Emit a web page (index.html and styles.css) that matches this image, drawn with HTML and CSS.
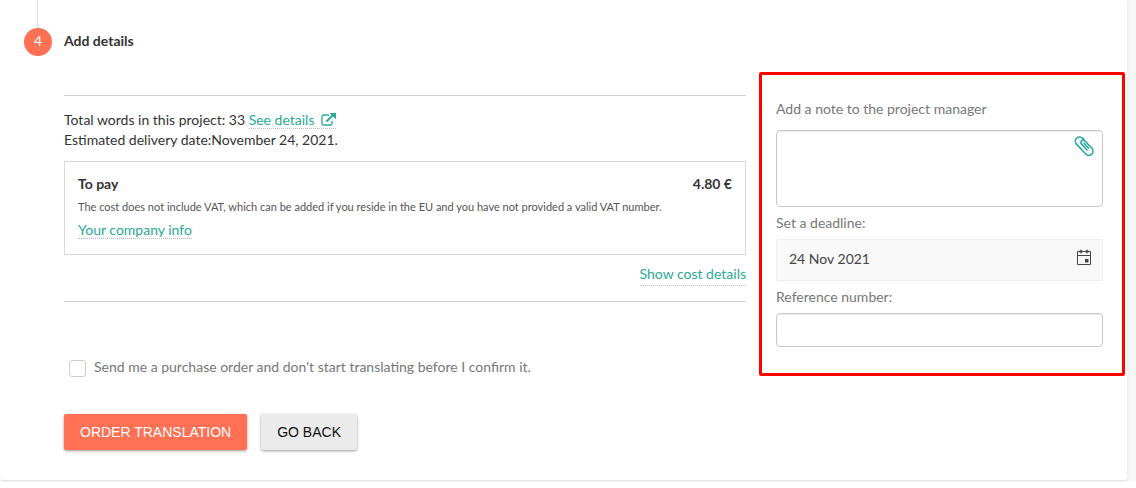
FILE: index.html
```html
<!DOCTYPE html>
<html lang="en">
	<head>
		<meta charset="UTF-8">
		<meta name="viewport" content="width=device-width,initial-scale=1" />
		<title>Add details</title>
		<link rel="stylesheet" href="styles.css">
	</head>
	<body>
		<div class="page">
			<form class="card">
				<div class="line"></div>
				<header class="step">
					<span class="step-num">4</span>
					<h2 class="step-title">Add details</h2>
				</header>
				<div class="columns">
					<section class="order">
						<div class="summary">
							<p>Total words in this project: 33 <a href="#" class="link">See details
								<svg class="icon-open" width="15" height="13" viewBox="0 0 15 13"><path d="M8 2H2.500Q1 2 1 3.500v7Q1 12 2.500 12h7Q11 12 11 10.500V8" fill="none" stroke="currentColor" stroke-width="1.300"/><path d="M5.500 8.500 12 2" stroke="currentColor" stroke-width="2"/><path d="M8.500 0H15v6.200z" fill="currentColor"/></svg></a></p>
							<p>Estimated delivery date:November 24, 2021.</p>
							<div class="pay">
								<div class="pay-row"><strong>To pay</strong><strong>4.80 €</strong></div>
								<p class="pay-note">The cost does not include VAT, which can be added if you reside in the EU and you have not provided a valid VAT number.</p>
								<a href="#" class="link">Your company info</a>
							</div>
							<div class="cost"><a href="#" class="link link-cost">Show cost details</a></div>
						</div>
						<label class="check"><input type="checkbox">Send me a purchase order and don't start translating before I confirm it.</label>
						<div class="buttons">
							<button type="submit" class="btn btn-order">ORDER TRANSLATION</button>
							<button type="button" class="btn">GO BACK</button>
						</div>
					</section>
					<aside class="extra">
						<label for="note" class="note-label">Add a note to the project manager</label>
						<div class="field">
							<textarea id="note" class="note"></textarea>
							<button type="button" class="attach" aria-label="Attach a file">
								<svg width="20" height="20" viewBox="0 0 20 20" fill="none" stroke="currentColor" stroke-width="1.600" stroke-linecap="round"><g transform="translate(10 10) rotate(-43)"><path d="M4.200-1.500V-6.500a4.200 4.200 0 0 0-8.400 0V7a4.200 4.200 0 0 0 8.400 0V-3a2.200 2.200 0 0 0-4.700 0V5"/><path d="M1.800-2V4.500"/></g></svg>
							</button>
						</div>
						<label for="deadline">Set a deadline:</label>
						<div class="field">
							<input type="text" id="deadline" class="date" value="24 Nov 2021" readonly>
							<svg class="icon-date" width="16" height="16" viewBox="0 0 16 16" fill="none" stroke="#444"><path d="M1.500 2.500h13v13h-13zM1.500 6.500h13"/><path d="M3.500 2.500h3M9.500 2.500h3" stroke-width="2"/><path d="M5 .500v4M11 .500v4"/><path d="M9 10h3.500v3.500H9z" fill="#444" stroke="none"/></svg>
						</div>
						<label for="reference">Reference number:</label>
						<input type="text" id="reference" class="reference">
					</aside>
				</div>
			</form>
		</div>
	</body>
</html>
```
FILE: styles.css
```css
*{
	box-sizing: border-box;
}
body{
	margin: 0;
	background: #fff;
	color: #333;
	font: 14px/20px Lato, "Liberation Sans", sans-serif;
}
p, h2{
	margin: 0;
}
.page{
	padding: 0 9px 2px 0;
	background: #f7f7f7;
}
.card{
	padding: 0 2px 30px 24px;
	background: #fff;
	border-radius: 0 0 3px 3px;
	box-shadow: 0 1px 3px rgba(0,0,0,.1);
}
.line{
	width: 1px;
	height: 28px;
	margin-left: 13px;
	background: #ddd;
}
.step{
	display: flex;
	gap: 12px;
}
.step-num{
	width: 28px;
	height: 28px;
	border-radius: 50%;
	background: #ff7054;
	color: #fff;
	line-height: 26px;
	text-align: center;
}
.step-title{
	font-size: 14px;
	line-height: 26px;
}
.columns{
	display: flex;
	align-items: flex-start;
	gap: 13px;
	margin-top: 16px;
	padding-left: 40px;
}
.order{
	flex: 1;
	padding-top: 23px;
}
.summary{
	padding: 14px 0 15px;
	border-top: 1px solid #d0d0d0;
	border-bottom: 1px solid #d0d0d0;
}
.link{
	color: #2aa996;
	text-decoration: none;
	border-bottom: 1px dotted #bbb;
}
.icon-open{
	margin-left: 3px;
	vertical-align: -1px;
}
.pay{
	margin-top: 11px;
	padding: 12px 13px 14px;
	border: 1px solid #d8d8d8;
}
.pay-row{
	display: flex;
	justify-content: space-between;
}
.pay-note{
	margin: 3px 0;
	font-size: 11px;
	color: #555;
}
.cost{
	display: flex;
	justify-content: flex-end;
	margin-top: 9px;
}
.link-cost{
	padding-bottom: 1px;
}
.check{
	display: flex;
	align-items: center;
	gap: 8px;
	margin-top: 55px;
	padding-left: 5px;
	color: #777;
}
.check input{
	appearance: none;
	width: 17px;
	height: 17px;
	margin: 2px 0 0;
	border: 1px solid #ccc;
	border-radius: 3px;
	background: #fff;
}
.check input:checked{
	background: #2aa996;
}
.buttons{
	display: flex;
	gap: 14px;
	margin-top: 37px;
}
.btn{
	height: 36px;
	padding: 0 16px;
	border: 0;
	border-radius: 2px;
	background: #ebebeb;
	color: #111;
	font: 14px "Liberation Sans", sans-serif;
	box-shadow: 0 1px 3px rgba(0,0,0,.4);
}
.btn-order{
	background: #ff7054;
	color: #fff;
}
.extra{
	display: flex;
	flex-direction: column;
	width: 366px;
	padding: 24px 19px 26px 14px;
	border: 3px solid #f00;
	border-radius: 2px;
	color: #777;
}
.extra label{
	margin-bottom: 6px;
}
.extra .note-label{
	margin-bottom: 11px;
}
.field{
	position: relative;
	margin-bottom: 6px;
}
.note, .date, .reference{
	display: block;
	width: 100%;
	border: 1px solid #c8c8c8;
	border-radius: 4px;
	background: #fff;
	color: #444;
	font: inherit;
	box-shadow: inset 0 1px 1px rgba(0,0,0,.08);
}
.note{
	height: 77px;
	resize: none;
}
.attach{
	position: absolute;
	top: 6px;
	right: 9px;
	padding: 0;
	border: 0;
	background: none;
	color: #2aa9a0;
	line-height: 0;
}
.date{
	height: 42px;
	padding: 0 12px 4px;
	border-color: #eee;
	border-radius: 2px;
	background: #f9f9f9;
	box-shadow: none;
}
.icon-date{
	position: absolute;
	top: 10px;
	right: 11px;
}
.reference{
	height: 34px;
}
```
